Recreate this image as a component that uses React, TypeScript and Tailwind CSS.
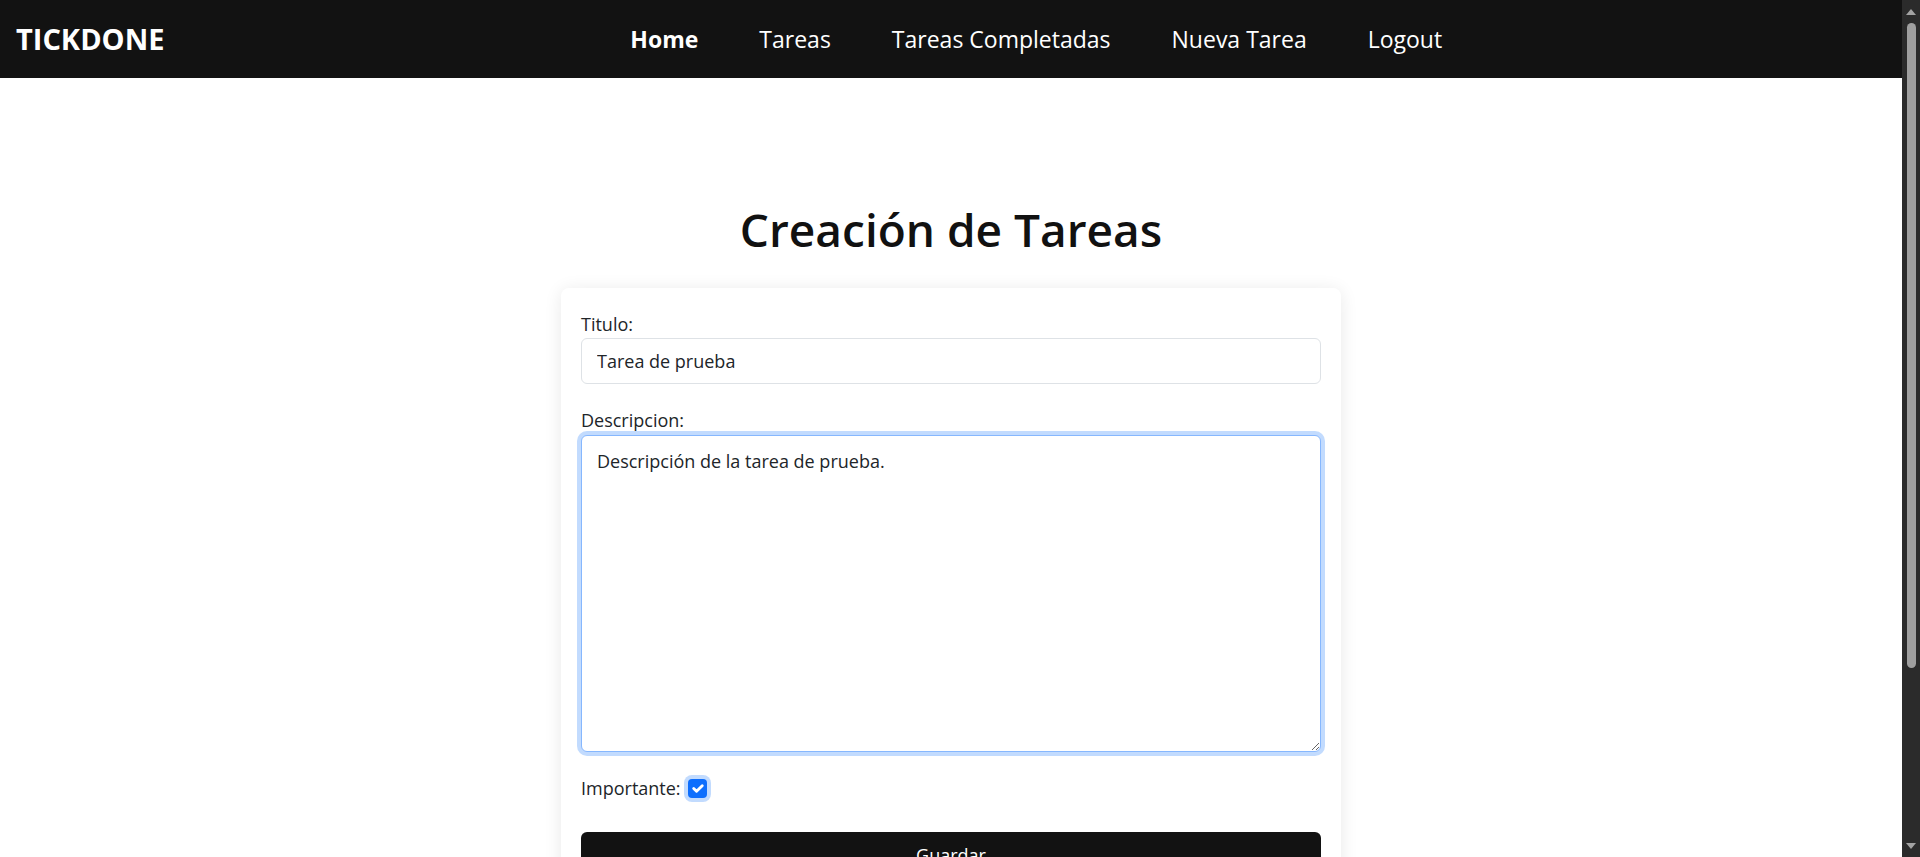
import React from "react";

function NavLink({ label, active }: { label: string; active?: boolean }) {
  return (
    <li>
      <a
        href="#"
        className={
          active
            ? "text-white text-[23px] font-bold leading-[78px]"
            : "text-white text-[23px] font-normal leading-[78px]"
        }
      >
        {label}
      </a>
    </li>
  );
}

function CheckIcon() {
  return (
    <svg viewBox="0 0 20 20" className="w-[19px] h-[19px]" fill="none">
      <path
        d="m6 10 3 3 6-6"
        stroke="#ffffff"
        strokeWidth="3"
        strokeLinecap="round"
        strokeLinejoin="round"
      />
    </svg>
  );
}

function Scrollbar() {
  return (
    <div className="w-[18px] h-screen shrink-0 bg-[#2b2b2b] flex flex-col items-center">
      <div className="h-[20px] w-full flex items-center justify-center pt-[3px]">
        <svg viewBox="0 0 10 6" className="w-[10px] h-[6px]">
          <path d="M0 6 L5 0 L10 6 Z" fill="#a3a3a3" />
        </svg>
      </div>
      <div className="flex-1 w-full flex flex-col items-center pt-[3px]">
        <div className="w-[9px] h-[645px] rounded-full bg-[#9f9f9f]" />
      </div>
      <div className="h-[20px] w-full flex items-center justify-center pb-[3px]">
        <svg viewBox="0 0 10 6" className="w-[10px] h-[6px]">
          <path d="M0 0 L10 0 L5 6 Z" fill="#a3a3a3" />
        </svg>
      </div>
    </div>
  );
}

export default function App() {
  return (
    <div className="h-screen flex overflow-hidden bg-white font-['Open_Sans',sans-serif] text-[#212529]">
      <div className="flex-1 min-w-0 h-screen overflow-hidden">
        <nav className="h-[78px] bg-[#121212] flex items-center pl-4 pr-4">
          <span className="text-white text-[29px] font-bold leading-[78px]">TICKDONE</span>
          <ul className="flex-1 flex justify-center gap-[61px] pl-[22px]">
            <NavLink label="Home" active />
            <NavLink label="Tareas" />
            <NavLink label="Tareas Completadas" />
            <NavLink label="Nueva Tarea" />
            <NavLink label="Logout" />
          </ul>
        </nav>

        <main className="flex flex-col items-center pt-[123px] pb-[195px]">
          <h1 className="text-[46px] font-semibold leading-[56px] text-[#111111]">
            Creación de Tareas
          </h1>

          <form className="mt-[31px] w-[780px] bg-white rounded-[8px] shadow-[0_2px_18px_rgba(0,0,0,0.09)] pt-[24px] px-[20px] pb-[20px] flex flex-col">
            <label className="text-[18px] leading-[24px] mb-[2px]">Titulo:</label>
            <input
              type="text"
              defaultValue="Tarea de prueba"
              className="h-[46px] w-full border border-[#dee2e6] rounded-[6px] px-[15px] text-[18px] text-[#212529] bg-white outline-none"
            />

            <label className="mt-[24px] text-[18px] leading-[24px] mb-[3px]">Descripcion:</label>
            <textarea
              defaultValue="Descripción de la tarea de prueba."
              className="h-[317px] w-full border border-[#86b7fe] rounded-[6px] px-[15px] py-[12px] text-[18px] leading-[27px] text-[#212529] bg-white outline-none shadow-[0_0_0_4px_rgba(13,110,253,0.25)]"
            />

            <div className="mt-[24px] flex items-center h-[24px]">
              <span className="text-[18px] leading-[24px]">Importante:</span>
              <span className="ml-[7px] w-[19px] h-[19px] rounded-[4px] bg-[#0d6efd] flex items-center justify-center shadow-[0_0_0_4px_rgba(13,110,253,0.25)]">
                <CheckIcon />
              </span>
            </div>

            <button
              type="button"
              className="mt-[32px] w-full h-[46px] bg-[#121212] text-white rounded-[6px] text-[18px] leading-[24px]"
            >
              Guardar
            </button>
          </form>
        </main>
      </div>
      <Scrollbar />
    </div>
  );
}
